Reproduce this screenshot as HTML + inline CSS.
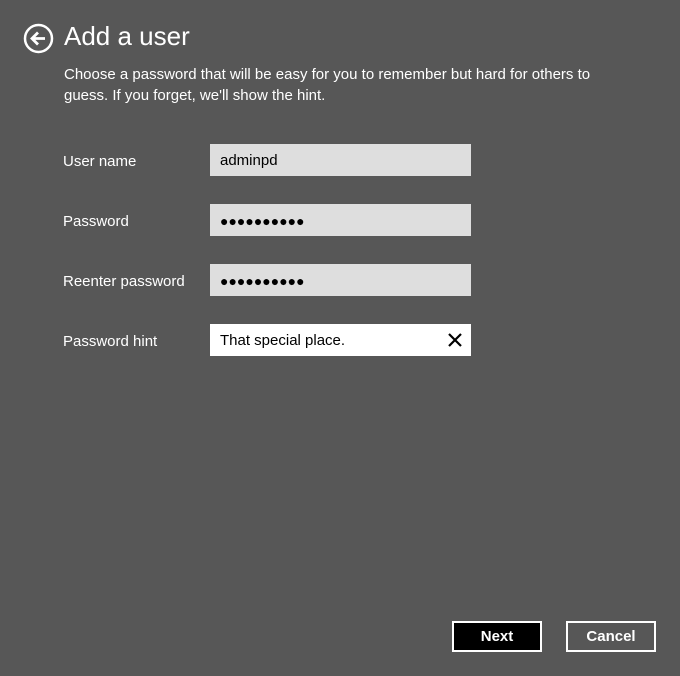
<!DOCTYPE html>
<html><head><style>
body{margin:0;width:680px;height:676px;background:#575757;font-family:"Liberation Sans",sans-serif;color:#fff;position:relative;overflow:hidden}
.a{position:absolute}
.t{font-size:26px;left:64px;top:21px}
.d{font-size:15px;left:64px;top:64px;line-height:21px;width:560px}
.l{font-size:15px;left:63px}
.i{left:210px;width:261px;height:32px;background:#dedede;color:#000;font-size:15px;box-sizing:border-box;padding-left:10px;line-height:34px}
.dots{font-size:14px;letter-spacing:0px}
.b{top:621px;height:31px;box-sizing:border-box;border:2px solid #fff;font-size:15px;text-align:center;line-height:27px;font-weight:bold}
</style></head><body>
<svg class="a" style="left:23px;top:23px" width="31" height="31" viewBox="0 0 31 31"><circle cx="15.5" cy="15.5" r="13.5" fill="none" stroke="#fff" stroke-width="2.5"/><path d="M22 15.5H10M15 9.5l-6 6 6 6" fill="none" stroke="#fff" stroke-width="2.8"/></svg>
<div class="a t">Add a user</div>
<div class="a d">Choose a password that will be easy for you to remember but hard for others to guess. If you forget, we'll show the hint.</div>
<div class="a l" style="top:153px">User name</div>
<div class="a l" style="top:213px">Password</div>
<div class="a l" style="top:273px">Reenter password</div>
<div class="a l" style="top:333px">Password hint</div>
<div class="a i" style="top:144px">adminpd</div>
<div class="a i dots" style="top:204px">●●●●●●●●●●</div>
<div class="a i dots" style="top:264px">●●●●●●●●●●</div>
<div class="a i" style="top:324px;background:#fff">That special place.<svg class="a" style="left:238px;top:9px" width="14" height="14" viewBox="0 0 14 14"><path d="M1 1L13 13M13 1L1 13" stroke="#000" stroke-width="2.2"/></svg></div>
<div class="a b" style="left:452px;width:90px;background:#000">Next</div>
<div class="a b" style="left:566px;width:90px">Cancel</div>
</body></html>
